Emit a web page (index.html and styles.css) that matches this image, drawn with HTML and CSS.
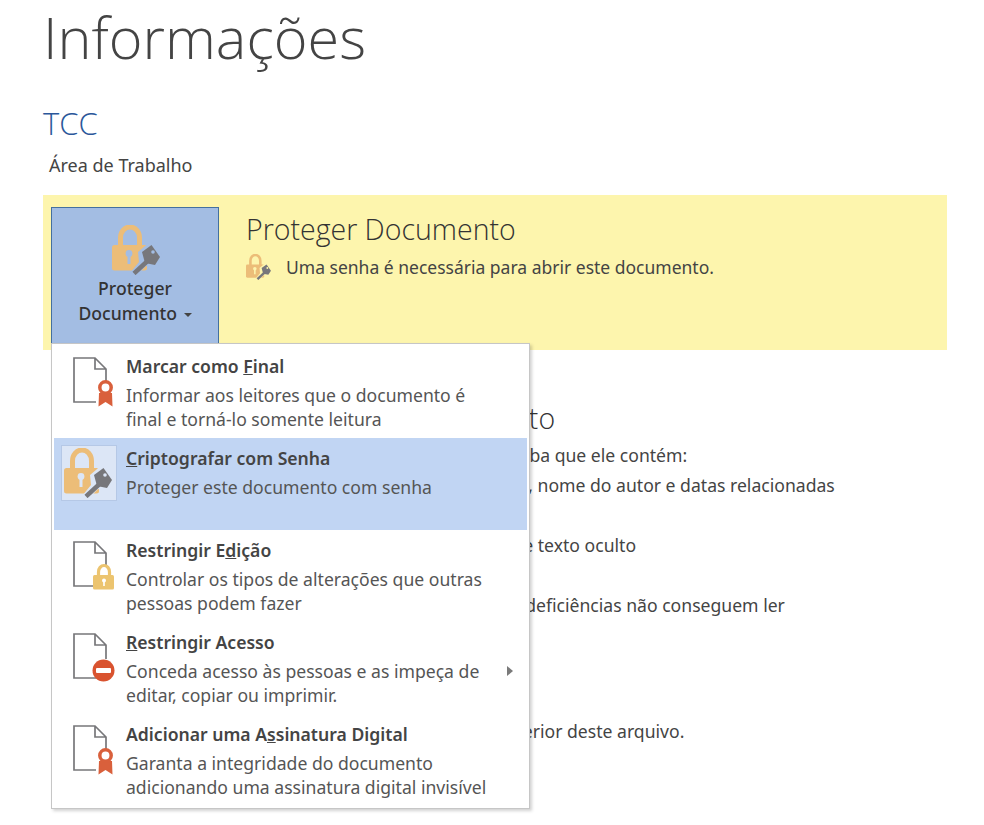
FILE: index.html
```html
<!DOCTYPE html>
<html lang="pt-BR">
<head>
    <meta charset="UTF-8">
    <meta name="viewport" content="width=device-width, initial-scale=1.0">
    <title>Informações</title>
    <link rel="stylesheet" href="styles.css">
</head>
<body>
    <svg class="defs" width="0" height="0" aria-hidden="true">
        <symbol id="lockKey" viewBox="0 0 50 50">
            <path d="M8.500 21V13a9.500 11 0 0 1 19 0v8" fill="none" stroke="#ecbd78" stroke-width="5"/>
            <rect x="0" y="20" width="35" height="25.500" rx="2.500" fill="#ecbd78"/>
            <circle cx="17" cy="28.500" r="3.400" class="keyhole"/>
            <rect x="15.500" y="29" width="3" height="10" class="keyhole"/>
            <path d="M18 48l9-11-1-10 13-11 13 16-7 11-11-2-10 10z" class="keyhole"/>
            <path d="M39.500 20l8.500 12-5 8-10-2-3-11z" fill="#77777b"/>
            <path d="M35 36.500L22 48.500" stroke="#77777b" stroke-width="4.500" fill="none"/>
            <circle cx="41" cy="27" r="1.800" class="keyhole"/>
        </symbol>
        <symbol id="page" viewBox="0 0 44 52">
            <path d="M23 45H1V1H22L33 12V26M22 1V12H33" fill="none" stroke="#77777a" stroke-width="1.700"/>
        </symbol>
        <symbol id="ribbon" viewBox="0 0 44 52">
            <path d="M26 36H39L39.500 49.500 32.500 45 25.500 49.500z" fill="#d9603c"/>
            <circle cx="32.500" cy="30.500" r="5.700" fill="#fff" stroke="#d9603c" stroke-width="3.500"/>
        </symbol>
    </svg>

    <div class="page">
        <h1 class="page-title">Informações</h1>
        <h2 class="doc-name">TCC</h2>
        <p class="doc-path">Área de Trabalho</p>

        <section class="protect-bar">
            <button class="protect-btn" type="button">
                <svg class="protect-icon"><use href="#lockKey"/></svg>
                <span>Proteger</span>
                <span>Documento <i class="caret"></i></span>
            </button>
            <div class="protect-info">
                <h3>Proteger Documento</h3>
                <p>
                    <svg class="small-lock"><use href="#lockKey"/></svg>
                    Uma senha é necessária para abrir este documento.
                </p>
            </div>
        </section>

        <section class="inspect">
            <h3>Inspecionar Documento</h3>
            <p>Antes de publicar este arquivo, saiba que ele contém:</p>
            <ul>
                <li class="gap-after">Propriedades do documento, nome do autor e datas relacionadas</li>
                <li class="gap-after">Cabeçalhos, rodapés, notas e texto oculto</li>
                <li>Conteúdo que pessoas com deficiências não conseguem ler</li>
            </ul>
            <p class="versions">Não há nenhuma versão anterior deste arquivo.</p>
        </section>

        <div class="menu">
            <div class="menu-item">
                <div class="item-icon">
                    <svg class="doc-icon"><use href="#page"/><use href="#ribbon"/></svg>
                </div>
                <div class="item-text">
                    <strong>Marcar como <u>F</u>inal</strong>
                    <span>Informar aos leitores que o documento é<br>final e torná-lo somente leitura</span>
                </div>
            </div>
            <div class="menu-item active">
                <div class="item-icon boxed">
                    <svg class="big-lock"><use href="#lockKey"/></svg>
                </div>
                <div class="item-text">
                    <strong><u>C</u>riptografar com Senha</strong>
                    <span>Proteger este documento com senha</span>
                </div>
            </div>
            <div class="menu-item">
                <div class="item-icon">
                    <svg class="doc-icon" viewBox="0 0 44 52">
                        <use href="#page" width="44" height="52"/>
                        <path d="M25.500 36v-5a5.500 6.500 0 0 1 11 0v5" fill="none" stroke="#ecc46f" stroke-width="3.200"/>
                        <rect x="20" y="34" width="21" height="14.500" rx="1.500" fill="#ecc46f"/>
                        <circle cx="31" cy="39.500" r="2" fill="#fff"/>
                        <rect x="30.200" y="40" width="1.600" height="5" fill="#fff"/>
                    </svg>
                </div>
                <div class="item-text">
                    <strong>Restringir E<u>d</u>ição</strong>
                    <span>Controlar os tipos de alterações que outras<br>pessoas podem fazer</span>
                </div>
            </div>
            <div class="menu-item">
                <div class="item-icon">
                    <svg class="doc-icon" viewBox="0 0 44 52">
                        <use href="#page" width="44" height="52"/>
                        <circle cx="30.500" cy="37.500" r="11" fill="#d9532f"/>
                        <rect x="23" y="35" width="15" height="5" rx="1" fill="#fff"/>
                    </svg>
                </div>
                <div class="item-text">
                    <strong><u>R</u>estringir Acesso</strong>
                    <span>Conceda acesso às pessoas e as impeça de<br>editar, copiar ou imprimir.</span>
                </div>
                <i class="submenu-arrow"></i>
            </div>
            <div class="menu-item">
                <div class="item-icon">
                    <svg class="doc-icon"><use href="#page"/><use href="#ribbon"/></svg>
                </div>
                <div class="item-text">
                    <strong>Adicionar uma A<u>s</u>sinatura Digital</strong>
                    <span>Garanta a integridade do documento<br>adicionando uma assinatura digital invisível</span>
                </div>
            </div>
        </div>
    </div>
</body>
</html>
```

FILE: styles.css
```css
* {
    margin: 0;
    padding: 0;
    box-sizing: border-box;
}

body {
    font-family: "Noto Sans", "Open Sans", sans-serif;
    background-color: #fff;
    color: #444;
    overflow: hidden;
}

.defs {
    position: absolute;
}

.page {
    position: relative;
    width: 984px;
    height: 825px;
    padding: 0 37px 0 43px;
    overflow: hidden;
}

.page-title {
    font-family: "Open Sans", sans-serif;
    font-size: 57.6px;
    font-weight: 300;
    line-height: 73px;
}

.doc-name {
    margin-top: 29px;
    font-family: "Open Sans", sans-serif;
    font-size: 31px;
    font-weight: 300;
    line-height: 42px;
    color: #2b579a;
}

.doc-path {
    margin: 9px 0 0 6px;
    font-size: 18px;
    line-height: 24px;
}

/* yellow banner */
.protect-bar {
    display: flex;
    height: 155px;
    margin-top: 18px;
    padding: 12px 0 0 8px;
    background: #fdf5ad;
}

.protect-btn {
    display: flex;
    flex-direction: column;
    align-items: center;
    width: 168px;
    height: 137px;
    padding-top: 17px;
    background: #a3bde3;
    border: 1px solid #44709f;
    color: #333;
    font-family: inherit;
    font-size: 17.6px;
    font-weight: 500;
    line-height: 25px;
}

.protect-icon {
    width: 50px;
    height: 50px;
    margin: 0 0 1px 3px;
    --cut: #a3bde3;
}

.caret {
    display: inline-block;
    margin-left: 2px;
    vertical-align: middle;
    border-top: 4px solid #444;
    border-left: 4px solid transparent;
    border-right: 4px solid transparent;
}

.protect-info {
    margin-left: 27px;
}

.protect-info h3 {
    font-family: "Open Sans", sans-serif;
    font-size: 28.5px;
    font-weight: 300;
    line-height: 36px;
    margin-top: 4px;
    color: #333;
}

.protect-info p {
    display: flex;
    align-items: center;
    gap: 14px;
    font-size: 17.5px;
    line-height: 26px;
    margin-top: 7px;
}

.small-lock {
    width: 26px;
    height: 26px;
    --cut: #fdf5ad;
}

/* mostly hidden by the menu */
.inspect {
    margin: 50px 0 0 204px;
    font-size: 17.6px;
    line-height: 30px;
}

.inspect h3 {
    font-family: "Open Sans", sans-serif;
    font-size: 28.5px;
    font-weight: 300;
    line-height: 36px;
    margin-bottom: 4px;
    color: #333;
}

.inspect ul {
    list-style: none;
    padding-left: 45px;
}

.gap-after {
    margin-bottom: 30px;
}

.versions {
    margin: 96px 0 0 41px;
}

/* dropdown */
.menu {
    position: absolute;
    top: 343px;
    left: 51px;
    width: 479px;
    height: 466px;
    padding: 2px;
    background: #fff;
    border: 1px solid #c6c6c6;
    box-shadow: 2px 2px 3px rgba(0, 0, 0, 0.18);
}

.menu-item {
    display: flex;
    height: 92px;
    padding: 7px 0 0 7px;
}

.menu-item.active {
    background: #c1d5f3;
}

.item-icon {
    flex: none;
    width: 56px;
    height: 56px;
}

.item-icon.boxed {
    display: flex;
    align-items: center;
    justify-content: center;
    background: #dce6f6;
    border: 1px solid #b5c8e6;
}

.doc-icon {
    display: block;
    width: 44px;
    height: 52px;
    margin: 4px 0 0 12px;
}

.big-lock {
    width: 50px;
    height: 50px;
    --cut: #dce6f6;
}

.keyhole {
    fill: var(--cut);
}

.item-text {
    margin-left: 9px;
    padding-top: 1px;
    font-size: 17.6px;
    line-height: 24px;
    color: #555;
}

.item-text strong {
    display: block;
    margin-bottom: 5px;
    font-weight: 600;
    color: #444;
}

.item-text span {
    display: block;
}

.submenu-arrow {
    align-self: center;
    margin: -1px 14px 0 auto;
    border-left: 6px solid #7a7a7a;
    border-top: 5px solid transparent;
    border-bottom: 5px solid transparent;
}
```
